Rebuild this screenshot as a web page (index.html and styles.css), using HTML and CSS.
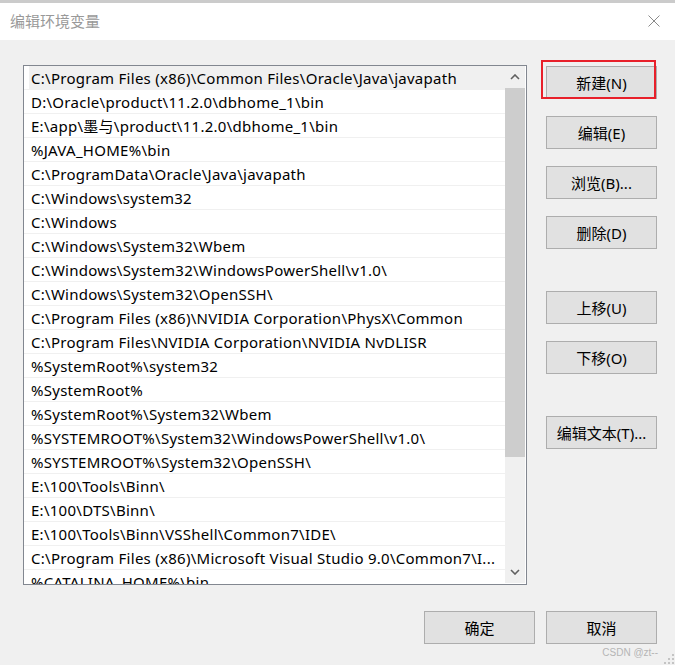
FILE: index.html
```html
<!DOCTYPE html>
<html lang="zh-CN">
<head>
    <meta charset="UTF-8">
    <meta name="viewport" content="width=device-width, initial-scale=1.0">
    <title>编辑环境变量</title>
    <link rel="stylesheet" href="styles.css">
</head>
<body>
    <div class="window">
        <div class="titlebar">
            <span class="title">编辑环境变量</span>
            <svg class="close" width="12" height="12" viewBox="0 0 12 12">
                <path d="M0.5 0.5 L11.5 11.5 M11.5 0.5 L0.5 11.5" stroke="#8a8a8a" stroke-width="1" fill="none"/>
            </svg>
        </div>
        <div class="content">
            <div class="main">
                <div class="listbox">
                    <div class="rows">
                        <div class="row selected">C:\Program Files (x86)\Common Files\Oracle\Java\javapath</div>
                        <div class="row">D:\Oracle\product\11.2.0\dbhome_1\bin</div>
                        <div class="row">E:\app\墨与\product\11.2.0\dbhome_1\bin</div>
                        <div class="row">%JAVA_HOME%\bin</div>
                        <div class="row">C:\ProgramData\Oracle\Java\javapath</div>
                        <div class="row">C:\Windows\system32</div>
                        <div class="row">C:\Windows</div>
                        <div class="row">C:\Windows\System32\Wbem</div>
                        <div class="row">C:\Windows\System32\WindowsPowerShell\v1.0\</div>
                        <div class="row">C:\Windows\System32\OpenSSH\</div>
                        <div class="row">C:\Program Files (x86)\NVIDIA Corporation\PhysX\Common</div>
                        <div class="row">C:\Program Files\NVIDIA Corporation\NVIDIA NvDLISR</div>
                        <div class="row">%SystemRoot%\system32</div>
                        <div class="row">%SystemRoot%</div>
                        <div class="row">%SystemRoot%\System32\Wbem</div>
                        <div class="row">%SYSTEMROOT%\System32\WindowsPowerShell\v1.0\</div>
                        <div class="row">%SYSTEMROOT%\System32\OpenSSH\</div>
                        <div class="row">E:\100\Tools\Binn\</div>
                        <div class="row">E:\100\DTS\Binn\</div>
                        <div class="row">E:\100\Tools\Binn\VSShell\Common7\IDE\</div>
                        <div class="row">C:\Program Files (x86)\Microsoft Visual Studio 9.0\Common7\I...</div>
                        <div class="row">%CATALINA_HOME%\bin</div>
                    </div>
                    <div class="scrollbar">
                        <div class="arrow">
                            <svg width="10" height="6" viewBox="0 0 10 6"><path d="M1 5 L5 1 L9 5" stroke="#606060" stroke-width="1.6" fill="none"/></svg>
                        </div>
                        <div class="thumb"></div>
                        <div class="track"></div>
                        <div class="arrow">
                            <svg width="10" height="6" viewBox="0 0 10 6"><path d="M1 1 L5 5 L9 1" stroke="#606060" stroke-width="1.6" fill="none"/></svg>
                        </div>
                    </div>
                </div>
                <div class="side-buttons">
                    <div class="btn focused">新建(N)</div>
                    <div class="btn">编辑(E)</div>
                    <div class="btn">浏览(B)...</div>
                    <div class="btn">删除(D)</div>
                    <div class="btn spaced">上移(U)</div>
                    <div class="btn">下移(O)</div>
                    <div class="btn spaced">编辑文本(T)...</div>
                </div>
            </div>
            <div class="footer">
                <div class="btn">确定</div>
                <div class="btn">取消</div>
            </div>
        </div>
        <div class="watermark">CSDN @zt--</div>
        <svg class="grip" width="10" height="10" viewBox="0 0 10 10">
            <rect x="8" y="0" width="2" height="2" fill="#c4c4c4"/>
            <rect x="4" y="4" width="2" height="2" fill="#c4c4c4"/>
            <rect x="8" y="4" width="2" height="2" fill="#c4c4c4"/>
            <rect x="0" y="8" width="2" height="2" fill="#c4c4c4"/>
            <rect x="4" y="8" width="2" height="2" fill="#c4c4c4"/>
            <rect x="8" y="8" width="2" height="2" fill="#c4c4c4"/>
        </svg>
    </div>
</body>
</html>
```

FILE: styles.css
```css
html, body {
    margin: 0;
    height: 100%;
}
body {
    background-color: #f0f0f0;
    font-family: "Noto Sans", "Noto Sans CJK SC", sans-serif;
    font-size: 15px;
    color: #000;
}
.window {
    position: relative;
    width: 675px;
    height: 665px;
    border-top: 3px solid #cbcbcb;
    box-sizing: border-box;
    overflow: hidden;
}
.titlebar {
    height: 37px;
    background-color: #fff;
    display: flex;
    align-items: center;
    justify-content: space-between;
    padding: 0 15px 0 10px;
}
.title {
    color: #999;
    font-family: "Noto Sans CJK SC", sans-serif;
    font-size: 15px;
    margin-top: -2px;
}
.close {
    margin-top: -2px;
}
.content {
    padding: 25px 0 0 23px;
}
.main {
    display: flex;
}
.listbox {
    width: 504px;
    height: 520px;
    box-sizing: border-box;
    border: 1px solid #828790;
    background-color: #fff;
    display: flex;
}
.rows {
    flex: 1;
    overflow: hidden;
}
.row {
    height: 21px;
    line-height: 21px;
    padding: 2px 0 0 7px;
    border-bottom: 1px solid #f0f0f0;
    letter-spacing: 0.27px;
    white-space: nowrap;
}
.selected {
    background: linear-gradient(to right, #fff 5px, #f0f0f0 5px);
}
.scrollbar {
    width: 20px;
    margin: 0 1px 1px 0;
    background-color: #f0f0f0;
    display: flex;
    flex-direction: column;
}
.arrow {
    height: 22px;
    display: flex;
    align-items: center;
    justify-content: center;
}
.thumb {
    height: 369px;
    background-color: #cdcdcd;
}
.track {
    flex: 1;
}
.side-buttons {
    margin-left: 19px;
    padding-top: 1px;
    display: flex;
    flex-direction: column;
    gap: 17px;
}
.btn {
    position: relative;
    width: 111px;
    height: 33px;
    box-sizing: border-box;
    border: 1px solid #adadad;
    background-color: #e1e1e1;
    display: flex;
    align-items: center;
    justify-content: center;
}
.side-buttons .spaced {
    margin-top: 25px;
}
/* 截图里的红色标注框 */
.focused::after {
    content: "";
    position: absolute;
    left: -6px;
    top: -7px;
    width: 115px;
    height: 39px;
    box-sizing: border-box;
    border: 2px solid #e8202a;
}
.footer {
    margin-top: 26px;
    padding-right: 18px;
    display: flex;
    justify-content: flex-end;
    gap: 11px;
}
.watermark {
    position: absolute;
    right: 17px;
    bottom: 7px;
    font-family: "Liberation Sans", sans-serif;
    font-size: 10px;
    color: #b5b5b5;
}
.grip {
    position: absolute;
    right: 1px;
    bottom: 1px;
}
```
